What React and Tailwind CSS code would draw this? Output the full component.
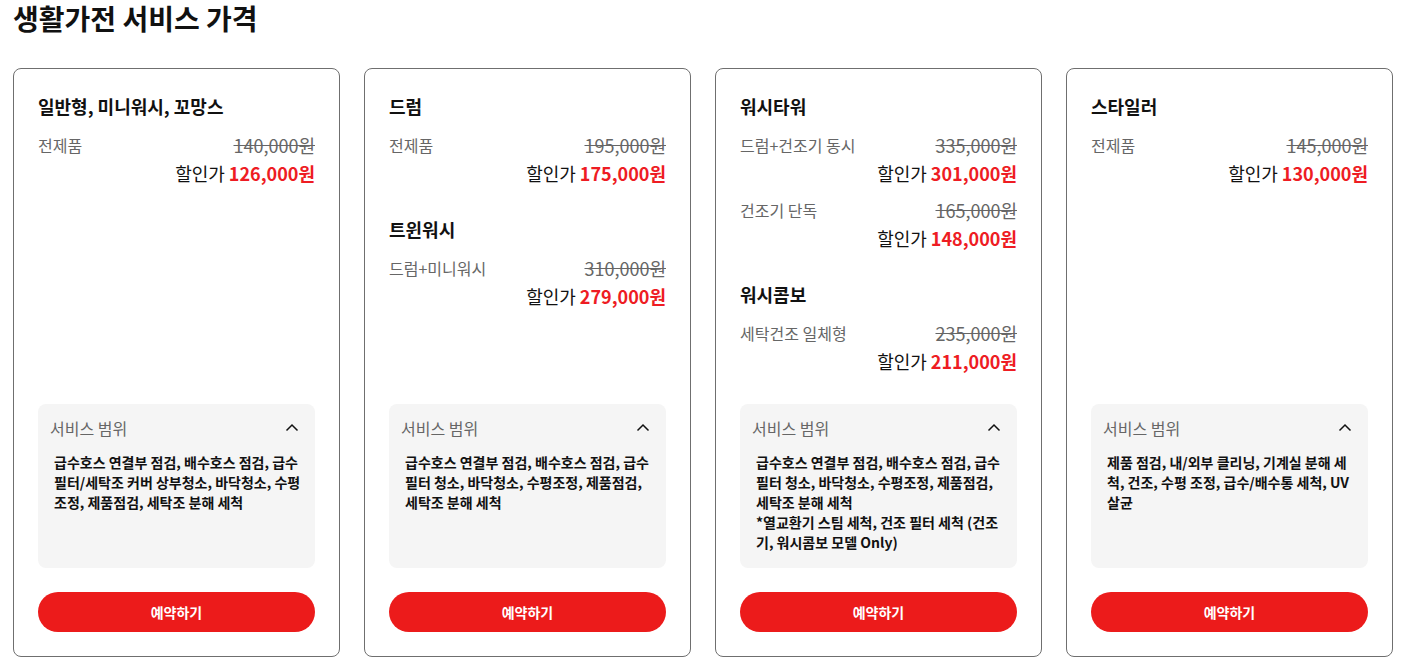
import React from "react";

const font = { fontFamily: '"Noto Sans CJK KR", "Noto Sans", sans-serif' };

const plans = [
  {
    id: "basic",
    sections: [
      {
        title: "일반형, 미니워시, 꼬망스",
        items: [{ label: "전제품", original: "140,000원", sale: "126,000원" }],
      },
    ],
    scope: "급수호스 연결부 점검, 배수호스 점검, 급수필터/세탁조 커버 상부청소, 바닥청소, 수평조정, 제품점검, 세탁조 분해 세척",
  },
  {
    id: "drum",
    sections: [
      {
        title: "드럼",
        items: [{ label: "전제품", original: "195,000원", sale: "175,000원" }],
      },
      {
        title: "트윈워시",
        items: [{ label: "드럼+미니워시", original: "310,000원", sale: "279,000원" }],
      },
    ],
    scope: "급수호스 연결부 점검, 배수호스 점검, 급수필터 청소, 바닥청소, 수평조정, 제품점검, 세탁조 분해 세척",
  },
  {
    id: "washtower",
    sections: [
      {
        title: "워시타워",
        items: [
          { label: "드럼+건조기 동시", original: "335,000원", sale: "301,000원" },
          { label: "건조기 단독", original: "165,000원", sale: "148,000원" },
        ],
      },
      {
        title: "워시콤보",
        items: [{ label: "세탁건조 일체형", original: "235,000원", sale: "211,000원" }],
      },
    ],
    scope: "급수호스 연결부 점검, 배수호스 점검, 급수필터 청소, 바닥청소, 수평조정, 제품점검, 세탁조 분해 세척\n*열교환기 스팀 세척, 건조 필터 세척 (건조기, 워시콤보 모델 Only)",
  },
  {
    id: "styler",
    sections: [
      {
        title: "스타일러",
        items: [{ label: "전제품", original: "145,000원", sale: "130,000원" }],
      },
    ],
    scope: "제품 점검, 내/외부 클리닝, 기계실 분해 세척, 건조, 수평 조정, 급수/배수통 세척, UV 살균",
  },
];

const ChevronUp = () => (
  <svg width="14" height="14" viewBox="0 0 14 14" fill="none">
    <path d="M1.5 9.5 L7 4 L12.5 9.5" stroke="#111" strokeWidth="1.5" />
  </svg>
);

const PriceItem = ({ item, first }) => (
  <div className={first ? "mt-[13px]" : "mt-[11px]"}>
    <div className="flex items-center justify-between">
      <span className="text-[16px] leading-6 text-[#666]">{item.label}</span>
      <span className="text-[18px] leading-6 text-[#666] line-through">{item.original}</span>
    </div>
    <div className="mt-[2px] text-right text-[18px] leading-7 text-[#111]">
      할인가 <span className="font-bold text-[#ee1c23]">{item.sale}</span>
    </div>
  </div>
);

const PlanCard = ({ plan }) => (
  <div className="flex h-[589px] flex-col rounded-lg border border-[#6f6f6f] bg-white px-6 pt-[23px] pb-6">
    <div className="flex-1">
      {plan.sections.map((section, i) => (
        <div key={section.title} className={i > 0 ? "mt-[28px]" : ""}>
          <h3 className="text-[18px] font-bold leading-7 text-[#111]">{section.title}</h3>
          {section.items.map((item, j) => (
            <PriceItem key={item.label} item={item} first={j === 0} />
          ))}
        </div>
      ))}
    </div>
    <div className="h-[164px] rounded-lg bg-[#f5f5f5] pt-3">
      <div className="flex items-center justify-between pl-3 pr-4">
        <span className="text-[16px] leading-6 text-[#666]">서비스 범위</span>
        <ChevronUp />
      </div>
      <p className="mt-3 whitespace-pre-line pl-4 pr-3 text-[14px] font-semibold leading-5 text-[#111]">
        {plan.scope}
      </p>
    </div>
    <button className="mt-6 h-10 w-full rounded-full bg-[#ec1b1b] text-[14px] font-bold text-white">
      예약하기
    </button>
  </div>
);

export default function App() {
  return (
    <div className="min-h-screen bg-white pl-[13px]" style={font}>
      <h1 className="text-[28px] font-bold leading-9 text-[#111]">생활가전 서비스 가격</h1>
      <div className="mt-8 grid w-[1380px] grid-cols-4 gap-6">
        {plans.map((plan) => (
          <PlanCard key={plan.id} plan={plan} />
        ))}
      </div>
    </div>
  );
}
